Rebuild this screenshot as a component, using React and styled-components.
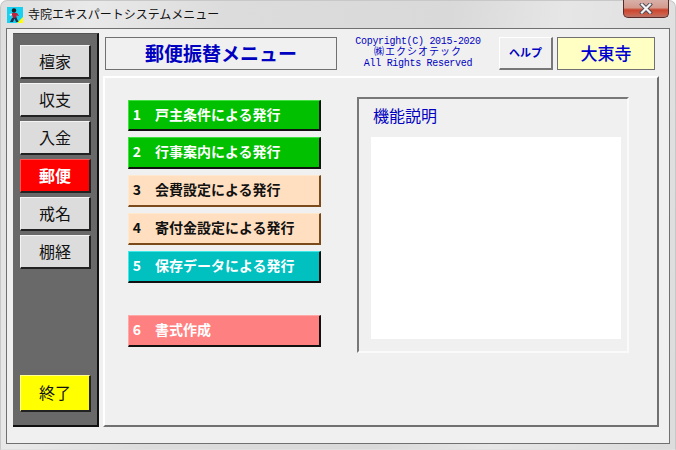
import React from "react";
import styled, { createGlobalStyle } from "styled-components";

const Global = createGlobalStyle`
  html, body { margin: 0; padding: 0; background: #fff; }
  * { box-sizing: border-box; }
  body { font-family: "Noto Sans CJK JP", "DejaVu Sans", sans-serif; }
`;

const Win = styled.div`
  width: 676px;
  height: 450px;
  display: flex;
  flex-direction: column;
  border-radius: 7px 7px 0 0;
  background: linear-gradient(100deg, #dedede 0%, #e9e9e9 12%, #dcdcdc 30%, #d9d9d9 60%, #e6e6e6 75%, #dcdcdc 100%);
  border: 1px solid #c8c8c8;
  border-bottom-color: #e0e0e0;
  padding: 0 6px 5px 5px;
`;

const TitleBar = styled.div`
  height: 27px;
  flex: none;
  display: flex;
  align-items: flex-start;
`;

const AppIcon = styled.svg`
  width: 16px;
  height: 16px;
  margin: 6px 5px 0 1px;
  flex: none;
`;

const Title = styled.div`
  font-size: 12px;
  line-height: 16px;
  margin-top: 5px;
  color: #111;
  flex: 1;
`;

const Close = styled.div`
  width: 46px;
  height: 18px;
  margin-top: -1px;
  border: 1px solid #5a2a26;
  border-top: none;
  border-radius: 0 0 5px 5px;
  background: linear-gradient(180deg, #d8b0a8 0%, #d49a8e 45%, #c8452f 58%, #cf5a44 80%, #b5736a 100%);
  display: flex;
  align-items: center;
  justify-content: center;
`;

const Client = styled.div`
  flex: 1;
  display: flex;
  gap: 4px;
  background: #f0f0f0;
  border: 1px solid #707070;
  padding: 4px 9px 16px 6px;
  margin-right: -1px;
`;

const Side = styled.div`
  width: 86px;
  flex: none;
  display: flex;
  flex-direction: column;
  gap: 4px;
  padding: 11px 6px 13px 7px;
  background: #696969;
  border-right: 2px solid #111;
  border-bottom: 2px solid #111;
  border-top: 1px solid #555;
`;

const SideBtn = styled.div`
  height: ${(p) => (p.$end ? "37px" : "34px")};
  flex: none;
  display: flex;
  align-items: center;
  justify-content: center;
  padding-bottom: 2px;
  font-size: 16px;
  color: ${(p) => p.$fg || "#111"};
  font-weight: ${(p) => (p.$bold ? 700 : 400)};
  background: ${(p) => p.$bg || "#dcdcdc"};
  border-top: 1px solid ${(p) => p.$hi || "#f4f4f4"};
  border-left: 1px solid ${(p) => p.$hi || "#f4f4f4"};
  border-right: 2px solid #222;
  border-bottom: 2px solid #222;
  margin-top: ${(p) => (p.$end ? "auto" : "0")};
`;

const Right = styled.div`
  flex: 1;
  display: flex;
  flex-direction: column;
  gap: 6px;
  min-width: 0;
`;

const Header = styled.div`
  display: flex;
  height: 33px;
  margin-top: 4px;
  margin-left: 2px;
  align-items: stretch;
`;

const MenuTitle = styled.div`
  width: 232px;
  border: 1px solid #707070;
  display: flex;
  align-items: center;
  justify-content: center;
  color: #0000c0;
  font-size: 19px;
  font-weight: 700;
  padding-bottom: 3px;
`;

const CopyWrap = styled.div`
  width: 162px;
  display: flex;
  flex-direction: column;
  align-items: center;
  justify-content: center;
  padding-bottom: 2px;
`;

const Copy = styled.div`
  color: #0000c0;
  font-family: "Liberation Mono", "Noto Sans CJK JP", monospace;
  font-size: 10px;
  line-height: 11px;
  height: 11px;
  letter-spacing: ${(p) => (p.$wide ? "1px" : "-0.3px")};
`;

const Help = styled.div`
  width: 54px;
  display: flex;
  align-items: center;
  justify-content: center;
  padding-bottom: 2px;
  color: #0000c0;
  font-size: 11px;
  font-weight: 700;
  background: #f0f0f0;
  border-top: 1px solid #fff;
  border-left: 1px solid #fff;
  border-right: 2px solid #777;
  border-bottom: 2px solid #777;
  margin-right: 4px;
`;

const Temple = styled.div`
  width: 98px;
  display: flex;
  align-items: center;
  justify-content: center;
  padding-bottom: 3px;
  background: #ffffc4;
  color: #0000d0;
  font-size: 17px;
  font-weight: 500;
  border: 1px solid #707070;
`;

const Main = styled.div`
  flex: 1;
  display: flex;
  gap: 36px;
  width: 556px;
  padding: 19px 0 0 23px;
  border-top: 2px solid #fff;
  border-left: 2px solid #fff;
  border-right: 2px solid #707070;
  border-bottom: 2px solid #707070;
`;

const Column = styled.div`
  width: 193px;
  flex: none;
  display: flex;
  flex-direction: column;
  gap: 6px;
  padding-top: 3px;
`;

const MenuBtn = styled.div`
  height: ${(p) => (p.$short ? "31px" : "32px")};
  flex: none;
  display: flex;
  align-items: center;
  padding: 0 0 3px 3px;
  gap: 13px;
  font-size: 14px;
  font-weight: 700;
  color: ${(p) => p.$fg};
  background: ${(p) => p.$bg};
  border-top: 1px solid ${(p) => p.$hi};
  border-left: 1px solid ${(p) => p.$hi};
  border-right: 2px solid ${(p) => p.$lo};
  border-bottom: 2px solid ${(p) => p.$lo};
  margin-top: ${(p) => (p.$gap ? "26px" : "0")};
`;

const Num = styled.span`
  width: 10px;
  text-align: center;
`;

const Group = styled.div`
  width: 272px;
  height: 256px;
  display: flex;
  flex-direction: column;
  padding: 6px 6px 12px 12px;
  border-top: 2px solid #787878;
  border-left: 2px solid #787878;
  border-right: 2px solid #fafafa;
  border-bottom: 2px solid #fafafa;
  background: #f0f0f0;
`;

const GroupLabel = styled.div`
  color: #0000c0;
  font-size: 16px;
  line-height: 20px;
  padding-left: 2px;
  margin-bottom: 12px;
`;

const Desc = styled.div`
  flex: 1;
  background: #fff;
`;

const side = ["檀家", "収支", "入金"];
const side2 = ["戒名", "棚経"];
const G = { $bg: "#00c000", $fg: "#fff", $hi: "#40e040", $lo: "#111" };
const P = { $bg: "#ffdfc0", $fg: "#111", $hi: "#ffe8d0", $lo: "#7a4a1a" };
const C = { $bg: "#00c0c0", $fg: "#fff", $hi: "#40e8e8", $lo: "#111" };
const R = { $bg: "#ff8080", $fg: "#fff", $hi: "#ffa8a8", $lo: "#111" };

export default function App() {
  return (
    <Win>
      <Global />
      <TitleBar>
        <AppIcon viewBox="0 0 16 16">
          <rect width="16" height="16" fill="#18d0f0" />
          <path d="M10 16 L16 10 V16 Z" fill="#ffff00" />
          <circle cx="7" cy="3.5" r="2.2" fill="#222" />
          <path d="M4.5 6 H10 L12 9 L9.5 8.5 L9.5 11 L6 11 Z" fill="#c0203a" />
          <path d="M5 11 L3 15 H6 L7.5 11.5 L9 15 H11.5 L9.5 10.5 Z" fill="#26304a" />
          <path d="M2.5 7 L5 6.5 L5 8 L3 9 Z" fill="#e8e8f0" />
        </AppIcon>
        <Title>寺院エキスパートシステムメニュー</Title>
        <Close>
          <svg width="14" height="11" viewBox="0 0 14 11">
            <path d="M3 1.5 L11 9.5 M11 1.5 L3 9.5" stroke="#4a4a55" strokeWidth="4" strokeLinecap="square" />
            <path d="M3 1.5 L11 9.5 M11 1.5 L3 9.5" stroke="#f4f4f4" strokeWidth="2.2" strokeLinecap="square" />
          </svg>
        </Close>
      </TitleBar>
      <Client>
        <Side>
          {side.map((s) => (
            <SideBtn key={s}>{s}</SideBtn>
          ))}
          <SideBtn $bg="#ff0000" $fg="#fff" $hi="#ff5050" $bold>郵便</SideBtn>
          {side2.map((s) => (
            <SideBtn key={s}>{s}</SideBtn>
          ))}
          <SideBtn $end $bg="#ffff00" $hi="#ffff90">終了</SideBtn>
        </Side>
        <Right>
          <Header>
            <MenuTitle>郵便振替メニュー</MenuTitle>
            <CopyWrap>
              <Copy>Copyright(C) 2015-2020</Copy>
              <Copy $wide>㈱エクシオテック</Copy>
              <Copy>All Rights Reserved</Copy>
            </CopyWrap>
            <Help>ヘルプ</Help>
            <Temple>大東寺</Temple>
          </Header>
          <Main>
            <Column>
              <MenuBtn {...G} $short><Num>1</Num>戸主条件による発行</MenuBtn>
              <MenuBtn {...G}><Num>2</Num>行事案内による発行</MenuBtn>
              <MenuBtn {...P}><Num>3</Num>会費設定による発行</MenuBtn>
              <MenuBtn {...P}><Num>4</Num>寄付金設定による発行</MenuBtn>
              <MenuBtn {...C}><Num>5</Num>保存データによる発行</MenuBtn>
              <MenuBtn {...R} $gap><Num>6</Num>書式作成</MenuBtn>
            </Column>
            <Group>
              <GroupLabel>機能説明</GroupLabel>
              <Desc />
            </Group>
          </Main>
        </Right>
      </Client>
    </Win>
  );
}
